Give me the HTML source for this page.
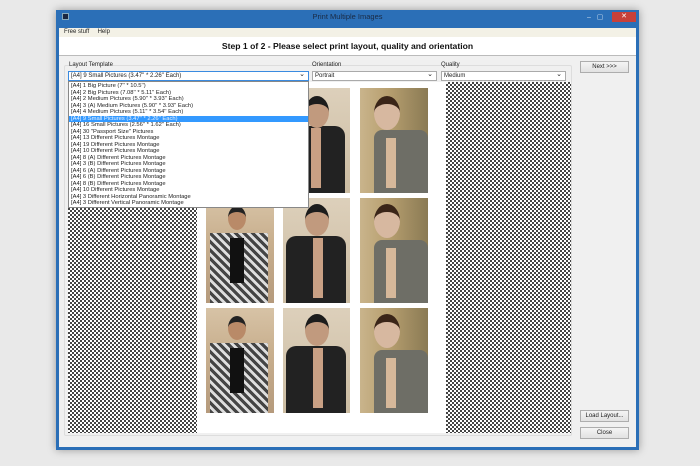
<!DOCTYPE html>
<html><head><style>
*{margin:0;padding:0;box-sizing:border-box}
body{width:700px;height:466px;background:#e9e9e9;font-family:"Liberation Sans",sans-serif;position:relative;overflow:hidden}
.a{position:absolute}
.win{left:56px;top:10px;width:583px;height:440px;background:#2b6fb7;box-shadow:0 0 8px rgba(0,0,0,.35)}
.t{font-size:6px;color:#222;white-space:nowrap}
.chk{background-color:#fff;background-image:conic-gradient(#444 25%,#fff 0 50%,#444 0 75%,#fff 0);background-size:4px 4px}
.btn{background:linear-gradient(#f4f4f4,#e2e2e2);border:1px solid #adadad;font-size:6px;text-align:center;color:#222}
.sel{background:#fff;border:1px solid #aaa;font-size:6px;padding:1px 2px;color:#222}
.sel:after{content:"⌄";position:absolute;right:3px;top:-2px;font-size:7px}
.p{position:absolute;overflow:hidden}
.p1{background:linear-gradient(180deg,#d7c3a6,#c9b08f 40%,#b59a7c)}
.p2{background:linear-gradient(180deg,#ddd0bb,#cbbca2)}
.p3{background:linear-gradient(90deg,#c9b48c,#b8a070 40%,#8a7a54)}
.p div{position:absolute}
.li{height:6.5px;line-height:6.5px;font-size:5.8px;padding-left:2px;color:#222;white-space:nowrap}
</style></head><body>
<div class="a win"></div>
<div class="a" style="left:62px;top:13px;width:7px;height:7px;background:#1b2740;border:1px solid #8ab"></div>
<div class="a" style="left:56px;top:12px;width:583px;text-align:center;font-size:7.5px;color:#1a2a44">Print Multiple Images</div>
<div class="a" style="left:587px;top:13px;font-size:7px;color:#cde">–&nbsp;&nbsp;&nbsp;▢</div>
<div class="a" style="left:612px;top:12px;width:24px;height:10px;background:#c7403a;color:#fff;font-size:7px;text-align:center;line-height:10px">✕</div>
<div class="a" style="left:59px;top:28px;width:577px;height:419px;background:#f0f0f0"></div>
<div class="a" style="left:59px;top:28px;width:577px;height:9px;background:#f3f1e6"></div>
<div class="a t" style="left:64px;top:29px">Free stuff&nbsp;&nbsp;&nbsp;&nbsp;&nbsp;Help</div>
<div class="a" style="left:59px;top:37px;width:577px;height:19px;background:#fff;border-bottom:1px solid #bbb"></div>
<div class="a" style="left:59px;top:41px;width:577px;text-align:center;font-size:8.6px;font-weight:bold;color:#111">Step 1 of 2 - Please select print layout, quality and orientation</div>
<div class="a" style="left:64px;top:65px;width:508px;height:371px;border:1px solid #ddd;border-radius:2px"></div>
<div class="a t" style="left:69px;top:62px;background:#f0f0f0">Layout Template</div>
<div class="a t" style="left:312px;top:62px">Orientation</div>
<div class="a t" style="left:441px;top:62px">Quality</div>
<div class="a sel" style="left:68px;top:71px;width:241px;height:10px;border-color:#3a8be0">[A4] 9 Small Pictures (3.47'' * 2.26'' Each)</div>
<div class="a sel" style="left:312px;top:71px;width:125px;height:10px">Portrait</div>
<div class="a sel" style="left:441px;top:71px;width:125px;height:10px">Medium</div>
<div class="a btn" style="left:580px;top:61px;width:49px;height:12px;line-height:10px">Next &gt;&gt;&gt;</div>
<div class="a btn" style="left:580px;top:410px;width:49px;height:12px;line-height:10px">Load Layout...</div>
<div class="a btn" style="left:580px;top:427px;width:49px;height:12px;line-height:10px">Close</div>
<div class="a chk" style="left:68px;top:82px;width:130px;height:351px"></div>
<div class="a chk" style="left:446px;top:82px;width:125px;height:351px"></div>
<div class="a" style="left:197px;top:82px;width:249px;height:351px;background:#fff"></div>

<div class="p p1" style="left:206px;top:88px;width:68px;height:105px"><div style="left:14px;top:35px;width:44px;height:70px;background:repeating-linear-gradient(45deg,#444 0 3px,#ddd 3px 6px)"></div><div style="left:24px;top:40px;width:14px;height:45px;background:#111"></div><div style="left:22px;top:10px;width:18px;height:24px;border-radius:50%;background:#b98a68;border-top:6px solid #222"></div></div>
<div class="p p2" style="left:283px;top:88px;width:67px;height:105px"><div style="left:6px;top:38px;width:56px;height:67px;background:#222;border-radius:10px 10px 0 0"></div><div style="left:28px;top:40px;width:10px;height:60px;background:#c9a084"></div><div style="left:22px;top:8px;width:24px;height:32px;border-radius:50%;background:#c19a7e;border-top:8px solid #1c1c1c"></div></div>
<div class="p p3" style="left:360px;top:88px;width:68px;height:105px"><div style="left:14px;top:42px;width:54px;height:63px;background:#6e6e66;border-radius:8px 8px 0 0"></div><div style="left:26px;top:50px;width:10px;height:50px;background:#d6b89a"></div><div style="left:14px;top:8px;width:26px;height:34px;border-radius:50%;background:#d7b8a0;border-top:8px solid #3a2518"></div></div>

<div class="p p1" style="left:206px;top:198px;width:68px;height:105px"><div style="left:4px;top:35px;width:58px;height:70px;background:repeating-linear-gradient(45deg,#444 0 3px,#ddd 3px 6px)"></div><div style="left:24px;top:40px;width:14px;height:45px;background:#111"></div><div style="left:22px;top:8px;width:18px;height:24px;border-radius:50%;background:#b98a68;border-top:6px solid #222"></div></div>
<div class="p p2" style="left:283px;top:198px;width:67px;height:105px"><div style="left:3px;top:38px;width:60px;height:67px;background:#222;border-radius:10px 10px 0 0"></div><div style="left:30px;top:40px;width:10px;height:60px;background:#c9a084"></div><div style="left:22px;top:6px;width:24px;height:32px;border-radius:50%;background:#c19a7e;border-top:8px solid #1c1c1c"></div></div>
<div class="p p3" style="left:360px;top:198px;width:68px;height:105px"><div style="left:14px;top:42px;width:54px;height:63px;background:#6e6e66;border-radius:8px 8px 0 0"></div><div style="left:26px;top:50px;width:10px;height:50px;background:#d6b89a"></div><div style="left:14px;top:6px;width:26px;height:34px;border-radius:50%;background:#d7b8a0;border-top:8px solid #3a2518"></div></div>

<div class="p p1" style="left:206px;top:308px;width:68px;height:105px"><div style="left:4px;top:35px;width:58px;height:70px;background:repeating-linear-gradient(45deg,#444 0 3px,#ddd 3px 6px)"></div><div style="left:24px;top:40px;width:14px;height:45px;background:#111"></div><div style="left:22px;top:8px;width:18px;height:24px;border-radius:50%;background:#b98a68;border-top:6px solid #222"></div></div>
<div class="p p2" style="left:283px;top:308px;width:67px;height:105px"><div style="left:3px;top:38px;width:60px;height:67px;background:#222;border-radius:10px 10px 0 0"></div><div style="left:30px;top:40px;width:10px;height:60px;background:#c9a084"></div><div style="left:22px;top:6px;width:24px;height:32px;border-radius:50%;background:#c19a7e;border-top:8px solid #1c1c1c"></div></div>
<div class="p p3" style="left:360px;top:308px;width:68px;height:105px"><div style="left:14px;top:42px;width:54px;height:63px;background:#6e6e66;border-radius:8px 8px 0 0"></div><div style="left:26px;top:50px;width:10px;height:50px;background:#d6b89a"></div><div style="left:14px;top:6px;width:26px;height:34px;border-radius:50%;background:#d7b8a0;border-top:8px solid #3a2518"></div></div>

<div class="a" style="left:68px;top:81px;width:241px;height:127px;background:#fff;border:1px solid #888;padding-top:1px">
<div class="li">[A4] 1 Big Picture (7'' * 10.5'')</div>
<div class="li">[A4] 2 Big Pictures (7.08'' * 5.11'' Each)</div>
<div class="li">[A4] 2 Medium Pictures (5.90'' * 3.93'' Each)</div>
<div class="li">[A4] 3 (A) Medium Pictures (5.90'' * 3.93'' Each)</div>
<div class="li">[A4] 4 Medium Pictures (5.11'' * 3.54'' Each)</div>
<div class="li" style="background:#3399ff;color:#e8f2ff">[A4] 9 Small Pictures (3.47'' * 2.26'' Each)</div>
<div class="li">[A4] 16 Small Pictures (2.56'' * 1.62'' Each)</div>
<div class="li">[A4] 30 "Passport Size" Pictures</div>
<div class="li">[A4] 13 Different Pictures Montage</div>
<div class="li">[A4] 19 Different Pictures Montage</div>
<div class="li">[A4] 10 Different Pictures Montage</div>
<div class="li">[A4] 8 (A) Different Pictures Montage</div>
<div class="li">[A4] 3 (B) Different Pictures Montage</div>
<div class="li">[A4] 6 (A) Different Pictures Montage</div>
<div class="li">[A4] 6 (B) Different Pictures Montage</div>
<div class="li">[A4] 8 (B) Different Pictures Montage</div>
<div class="li">[A4] 10 Different Pictures Montage</div>
<div class="li">[A4] 3 Different Horizontal Panoramic Montage</div>
<div class="li">[A4] 3 Different Vertical Panoramic Montage</div>
</div>
</body></html>
